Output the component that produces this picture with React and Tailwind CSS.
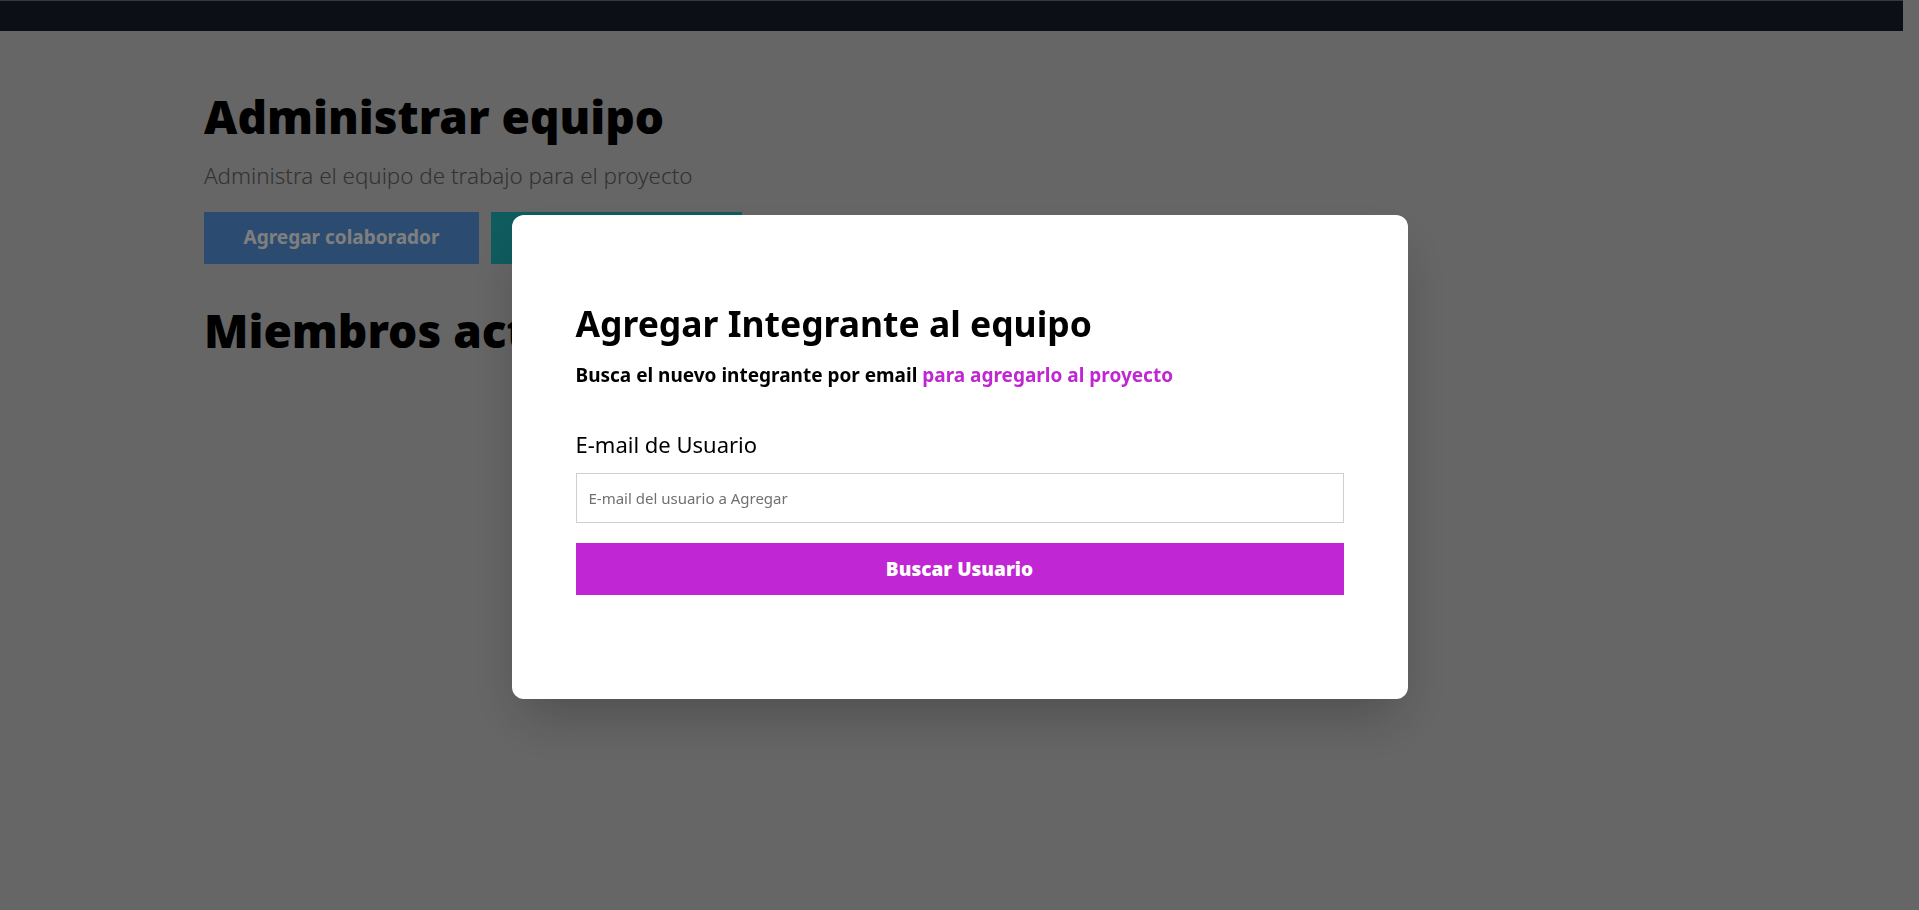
import { useState } from "react";

export default function App() {
    const [email, setEmail] = useState("");

    return (
        <div className="min-h-screen bg-[#cccccc] font-['Noto_Sans',sans-serif]">
            <nav className="mr-4 h-[31px] border-t border-[#747474] bg-[#181e2c]" />

            <main className="px-[204px] pt-[62px]">
                <h1 className="text-[46px] font-black leading-none text-black">Administrar equipo</h1>
                <p className="mt-5 text-[22.4px] font-light text-[#646464]">
                    Administra el equipo de trabajo para el proyecto
                </p>
                <div className="mt-[19px] flex gap-3">
                    <button className="h-[52px] w-[275px] bg-[#5896e0] text-[19px] font-bold text-white">
                        Agregar colaborador
                    </button>
                    <button className="h-[52px] w-[251px] bg-[#1eb8be] text-[19px] font-bold text-white">
                        Eliminar equipo
                    </button>
                </div>
                <h2 className="mt-[43px] text-[46px] font-black leading-none text-black">Miembros activos</h2>
            </main>

            <div className="fixed inset-0 bg-black/50" />

            <div className="fixed inset-0 flex items-center justify-center">
                <div className="mt-1 w-full max-w-4xl rounded-xl bg-white px-16 pt-[88px] pb-[104px] shadow-2xl">
                    <h3 className="text-[35.5px] font-bold leading-10 text-black">Agregar Integrante al equipo</h3>
                    <p className="mt-[18px] text-[19px] font-bold text-black">
                        Busca el nuevo integrante por email{" "}
                        <span className="text-[#c026d3]">para agregarlo al proyecto</span>
                    </p>

                    <form className="mt-[38px]" onSubmit={(e) => e.preventDefault()}>
                        <label htmlFor="email" className="block text-[22px] text-black">
                            E-mail de Usuario
                        </label>
                        <input
                            id="email"
                            type="email"
                            value={email}
                            onChange={(e) => setEmail(e.target.value)}
                            placeholder="E-mail del usuario a Agregar"
                            className="mt-3 h-[50px] w-full border border-[#cfcfcf] px-3 text-[15px] placeholder:text-[#707070] focus:outline-none"
                        />
                        <button
                            type="submit"
                            className="mt-5 h-[52px] w-full bg-[#c026d3] text-[19px] font-black text-white"
                        >
                            Buscar Usuario
                        </button>
                    </form>
                </div>
            </div>
        </div>
    );
}
